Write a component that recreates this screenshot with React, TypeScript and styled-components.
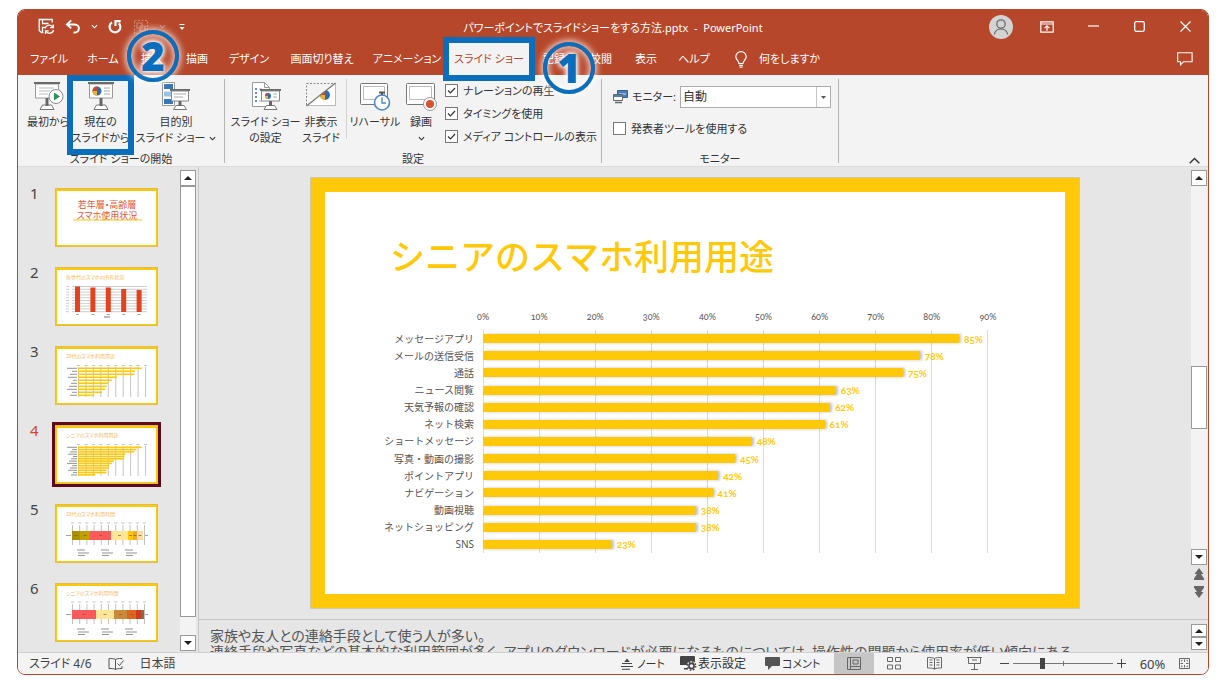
import React from "react";
import styled, { createGlobalStyle, css } from "styled-components";

const color = {
  brand: "#b7472a",
  ribbon: "#f3f3f3",
  canvas: "#e6e6e6",
  line: "#c6c6c6",
  text: "#333333",
  slide: "#ffc90a",
  mark: "#0a6ebd",
};

const Global = createGlobalStyle`
  *, *::before, *::after { box-sizing: border-box; }
  body {
    margin: 0;
    background: #fff;
    color: ${color.text};
    font-family: "Noto Sans", "Noto Sans CJK JP", sans-serif;
    font-size: 11px;
    line-height: 16px;
    font-feature-settings: "palt";
  }
  button, select, input { font: inherit; color: inherit; font-feature-settings: inherit; margin: 0; }
  button { border: 0; padding: 0; background: none; }
  svg { display: block; flex: none; }
`;

const Page = styled.div`
  height: 100vh;
  min-height: 520px;
  padding: 9px 16px 12px 17px;
`;

const Window = styled.div`
  height: 100%;
  display: flex;
  flex-direction: column;
  border: 1px solid ${color.brand};
  border-radius: 8px;
  background: ${color.canvas};
`;

/* Title bar */
const TitleBar = styled.header`
  flex: none;
  height: 33px;
  display: grid;
  grid-template-columns: 1fr auto 1fr;
  align-items: center;
  background: ${color.brand};
  border-radius: 7px 7px 0 0;
  color: #fff;
`;
const DocTitle = styled.h1`
  margin: 0;
  padding-top: 2px;
  font-size: 11px;
  font-weight: 400;
  white-space: pre;
`;
const QuickAccess = styled.div`
  display: flex;
  align-items: center;
  padding-left: 19px;
  gap: 9px;
`;
const WindowButtons = styled.div`
  display: flex;
  align-items: center;
  justify-content: flex-end;
`;
const IconButton = styled.button<{ $w: number; $dim?: boolean }>`
  display: flex;
  align-items: center;
  justify-content: center;
  width: ${(p) => p.$w}px;
  height: 26px;
  opacity: ${(p) => (p.$dim ? 0.35 : 1)};
`;

/* Tabs */
const TabBar = styled.nav`
  flex: none;
  height: 32px;
  display: flex;
  align-items: stretch;
  padding-left: 3px;
  background: ${color.brand};
  color: #fff;
`;
const Tab = styled.button<{ $w: number; $active?: boolean }>`
  position: relative;
  flex: none;
  width: ${(p) => p.$w}px;
  white-space: nowrap;
  display: flex;
  align-items: center;
  justify-content: center;
  ${(p) =>
    p.$active &&
    css`
      background: ${color.ribbon};
      color: ${color.brand};
    `}
`;
const TellMe = styled.button`
  display: flex;
  align-items: center;
  gap: 12px;
  padding-left: 16px;
`;
const CommentButton = styled.button`
  margin-left: auto;
  padding-right: 15px;
`;

/* Callouts laid over the ribbon */
const Frame = styled.span`
  position: absolute;
  inset: -6px;
  border: 6px solid ${color.mark};
  pointer-events: none;
  z-index: 2;
`;
const StepBadge = styled.span`
  position: absolute;
  z-index: 3;
  width: 52px;
  height: 52px;
  border: 4px solid ${color.mark};
  border-radius: 50%;
  box-shadow: 0 0 6px 2px rgba(255, 255, 255, 0.75), inset 0 0 6px 2px rgba(255, 255, 255, 0.75);
  color: ${color.mark};
  font: 800 40px/44px "Open Sans", sans-serif;
  text-align: center;
  text-shadow: 0 0 5px #fff, 0 0 5px #fff, 0 0 8px #fff;
  pointer-events: none;
`;
const StepOne = styled(StepBadge)`
  left: 94px;
  top: -1px;
`;
const StepTwo = styled(StepBadge)`
  left: 54px;
  top: -49px;
`;

/* Ribbon */
const Ribbon = styled.section`
  flex: none;
  height: 92px;
  display: flex;
  align-items: flex-start;
  padding-top: 4px;
  background: ${color.ribbon};
  border-bottom: 1px solid #dcdcdc;
`;
const Group = styled.div<{ $w: number }>`
  flex: none;
  width: ${(p) => p.$w}px;
  display: flex;
  flex-direction: column;
`;
const GroupBody = styled.div<{ $pad: number }>`
  height: 72px;
  padding-left: ${(p) => p.$pad}px;
  display: flex;
  align-items: flex-start;
`;
const GroupName = styled.div`
  text-align: center;
`;
const Divider = styled.div`
  flex: none;
  width: 1px;
  height: 84px;
  background: #b4b4b4;
`;
const ShortDivider = styled.div`
  flex: none;
  width: 1px;
  height: 60px;
  margin: 0 1px 0 4px;
  background: #d4d4d4;
`;
const BigButton = styled.button<{ $w: number }>`
  position: relative;
  flex: none;
  width: ${(p) => p.$w}px;
  height: 70px;
  padding-top: 3px;
  display: flex;
  flex-direction: column;
  align-items: center;
  white-space: nowrap;
  & > svg:first-child { margin-bottom: 3px; }
`;
const ButtonLine = styled.span`
  height: 16px;
  display: flex;
  align-items: center;
  gap: 4px;
`;
const CurrentFrame = styled(Frame)`
  inset: -4px -6px -6px;
`;
const CheckList = styled.div`
  display: flex;
  flex-direction: column;
  padding-left: 5px;
`;
const CheckLabel = styled.label`
  height: 23px;
  display: flex;
  align-items: center;
  gap: 5px;
  white-space: nowrap;
`;
const CheckBox = styled.input`
  appearance: none;
  flex: none;
  width: 13px;
  height: 13px;
  border: 1px solid #777;
  background: #fff;
  &:checked {
    background: #fff
      url("data:image/svg+xml,%3Csvg xmlns='http://www.w3.org/2000/svg' viewBox='0 0 11 11'%3E%3Cpath d='M2 5.5 4.5 8 9 3' fill='none' stroke='%23333' stroke-width='1.2'/%3E%3C/svg%3E")
      center / 11px no-repeat;
  }
`;
const MonitorForm = styled.div`
  display: flex;
  flex-direction: column;
  padding-top: 7px;
  gap: 9px;
`;
const MonitorRow = styled.div`
  display: flex;
  align-items: center;
  gap: 4px;
  width: 218px;
  white-space: nowrap;
`;
const SelectShell = styled.div`
  position: relative;
  width: 154px;
  height: 22px;
  margin-left: auto;
  border: 1px solid #ababab;
  background: #fff;
`;
const Select = styled.select`
  appearance: none;
  width: 100%;
  height: 100%;
  padding: 0 16px 0 2px;
  border: 0;
  background: none;
  outline: 0;
  font-size: 12px;
`;
const SelectArrow = styled.span`
  position: absolute;
  right: 0;
  top: 0;
  width: 14px;
  height: 100%;
  border-left: 1px solid #c6c6c6;
  display: flex;
  align-items: center;
  justify-content: center;
  pointer-events: none;
`;
const Collapse = styled.button`
  margin: auto 8px 0 auto;
`;

/* Work area */
const Work = styled.div`
  flex: 1;
  min-height: 0;
  display: flex;
`;
const ThumbPane = styled.aside`
  flex: none;
  width: 181px;
  padding-right: 1px;
  display: flex;
  overflow: hidden;
  border-right: 1px solid ${color.line};
`;
const ThumbList = styled.ol`
  flex: 1;
  margin: 0;
  padding: 21px 0 0 12px;
  list-style: none;
  overflow: hidden;
`;
const ThumbItem = styled.li<{ $active?: boolean }>`
  height: 79px;
  display: flex;
  font-size: 15px;
  line-height: 10px;
  color: ${(p) => (p.$active ? "#d24726" : "#444")};
  & > span { width: 25px; }
  & > svg { outline: ${(p) => (p.$active ? "3px solid #5e0a1c" : "0")}; }
`;
const ScrollBar = styled.div`
  flex: none;
  width: 16px;
  margin: 3px 1px 1px 0;
  display: flex;
  flex-direction: column;
`;
const ScrollButton = styled.button`
  flex: none;
  height: 16px;
  border: 1px solid #999;
  background: #fff;
  display: flex;
  align-items: center;
  justify-content: center;
`;
const Track = styled.div<{ $grow: number }>`
  flex: ${(p) => p.$grow} 0 0;
  background: #f3f3f3;
`;
const Handle = styled.div<{ $grow: number }>`
  flex: ${(p) => p.$grow} 0 0;
  border: 1px solid #999;
  background: #fff;
`;
const SlideSteps = styled.div`
  flex: none;
  height: 53px;
  padding-top: 3px;
  display: flex;
  flex-direction: column;
  align-items: center;
  gap: 4px;
`;
const Editor = styled.main`
  flex: 1;
  min-width: 0;
  display: flex;
  flex-direction: column;
`;
const Row = styled.div<{ $grow?: boolean }>`
  flex: ${(p) => (p.$grow ? "1" : "none")};
  min-height: 0;
  display: flex;
`;
const Stage = styled.div`
  flex: 1;
  min-width: 0;
  padding: 10px 0;
  display: flex;
  justify-content: center;
`;
const Slide = styled.article`
  height: 100%;
  aspect-ratio: 770 / 432;
  border: 15px solid ${color.slide};
  outline: 1px solid #d0c9ae;
  outline-offset: -1px;
  background: #fff;
  display: flex;
  flex-direction: column;
  font-feature-settings: normal;
`;
const SlideTitle = styled.h2`
  margin: 42px 0 0 65px;
  font: 500 35px/42px "Noto Sans CJK JP", sans-serif;
  color: ${color.slide};
  white-space: nowrap;
`;
const Chart = styled.div`
  flex: 1;
  display: grid;
  grid-template-columns: 158px 1fr;
  grid-template-rows: 14px 1fr;
  row-gap: 6px;
  margin: 34px 77px 41px 0;
  color: #555;
`;
const Axis = styled.div`
  grid-column: 2;
  margin: 0 -28px;
  display: grid;
  grid-template-columns: repeat(10, 1fr);
  font: 9px/14px Lato, sans-serif;
  font-variant-numeric: oldstyle-nums;
  text-align: center;
`;
const Categories = styled.div`
  display: grid;
  grid-template-rows: repeat(13, 1fr);
  align-items: center;
  justify-items: end;
  padding-right: 9px;
  font-size: 10px;
  line-height: 14px;
`;
const Plot = styled.div`
  display: grid;
  grid-template-rows: repeat(13, 1fr);
  align-items: center;
  border-right: 1px solid #d9d9d9;
  background: linear-gradient(to right, #d9d9d9 1px, transparent 1px) 0 0 / 56px 100%;
`;
const BarRow = styled.div`
  display: flex;
  align-items: center;
  gap: 5px;
  color: ${color.slide};
  font: 700 10px/14px Lato, sans-serif;
  font-variant-numeric: oldstyle-nums;
`;
const Bar = styled.div`
  flex: none;
  height: 9px;
  background: ${color.slide};
  box-shadow: 2px 0 3px rgba(0, 0, 0, 0.25);
`;
const Notes = styled.div`
  flex: 1;
  height: 33px;
  padding: 8px 0 0 11px;
  border-top: 1px solid ${color.line};
  overflow: hidden;
  white-space: nowrap;
  font-size: 14px;
  color: #555;
`;
const NotesScroll = styled.div`
  flex: none;
  width: 17px;
  height: 33px;
  padding: 4px 1px 2px 0;
  border-top: 1px solid ${color.line};
  display: flex;
  flex-direction: column;
  & > button { flex: 1; }
`;

/* Status bar */
const StatusBar = styled.footer`
  flex: none;
  height: 22px;
  display: flex;
  align-items: center;
  border-top: 1px solid #d0d0d0;
  border-radius: 0 0 7px 7px;
  background: ${color.ribbon};
  padding: 0 18px 0 11px;
  color: #444;
  white-space: nowrap;
  font-size: 12px;
`;
const StatusLeft = styled.div`
  flex: 1;
  display: flex;
  align-items: center;
  gap: 16px;
`;
const StatusButton = styled.button<{ $w: number; $gap?: number }>`
  flex: none;
  width: ${(p) => p.$w}px;
  display: flex;
  align-items: center;
  gap: ${(p) => p.$gap ?? 2}px;
  color: #333;
`;
const SmallText = styled.span`
  font-size: 11px;
`;
const ViewButton = styled.button<{ $active?: boolean }>`
  flex: none;
  width: 40px;
  height: 21px;
  display: flex;
  align-items: center;
  justify-content: center;
  background: ${(p) => (p.$active ? "#c6c6c6" : "none")};
`;
const ZoomGroup = styled.div`
  display: flex;
  align-items: center;
  gap: 4px;
  padding-left: 6px;
`;
const ZoomRange = styled.input`
  appearance: none;
  width: 100px;
  height: 11px;
  background:
    linear-gradient(#777, #777) center / 1px 5px no-repeat,
    linear-gradient(#777, #777) center / 100% 1px no-repeat;
  &::-webkit-slider-thumb {
    appearance: none;
    width: 5px;
    height: 11px;
    background: #444;
  }
`;
const ZoomValue = styled.button`
  width: 53px;
  font-size: 13px;
  text-align: center;
`;

const Triangle = ({ down, small }: { down?: boolean; small?: boolean }) => (
  <svg width={small ? 5 : 8} height={small ? 3 : 4} viewBox="0 0 8 4" preserveAspectRatio="none">
    <path d={down ? "M0 0h8L4 4z" : "M0 4h8L4 0z"} fill={small ? "#555" : "#222"} />
  </svg>
);
const Chevron = ({ up, w = 7 }: { up?: boolean; w?: number }) => (
  <svg width={w} height={w} viewBox="0 0 8 8" fill="none" stroke="currentColor" strokeWidth={up ? 1 : 1.3}>
    <path d={up ? "M0.5 6 4 2.5 7.5 6" : "M1 2.5 4 5.5 7 2.5"} />
  </svg>
);

const SaveIcon = () => (
  <svg width="17" height="17" viewBox="0 0 17 17" fill="none" stroke="#fff" strokeWidth="1.3">
    <path d="M5.5 14.5H3.5L1.2 12.500V1.500h13v3M4.500 1.500v4h6M4.500 14.500V9.500H7" />
    <path d="M7.200 10.400a4.200 4.200 0 0 1 7.800-1M15.600 12a4.200 4.200 0 0 1-7.800 1M15.300 6.400v3.200h-3.200M7.500 16v-3.200h3.200" />
  </svg>
);
const UndoIcon = () => (
  <svg width="16" height="16" viewBox="0 0 16 16" fill="none" stroke="#fff" strokeWidth="2">
    <path d="M6.200 1.400 2 5.400l4.200 4M2 5.400h7.500c6 0 6 8.200-1 8.400" />
  </svg>
);
const RepeatIcon = () => (
  <svg width="16" height="16" viewBox="0 0 16 16" fill="none" stroke="#fff" strokeWidth="2.200">
    <path d="M5 3.400a5.400 5.400 0 1 0 6.800.700M8.500 7V2.200h5.200" />
  </svg>
);
const ObjectsIcon = () => (
  <svg width="16" height="16" viewBox="0 0 16 16" fill="none" stroke="#fff" strokeWidth="1.2">
    <path d="M1.500 1.500h13v13h-13z" strokeDasharray="2 1.500" />
    <path d="M4 4h5v5H4zM7 7h5v5H7z" />
  </svg>
);
const CustomizeIcon = () => (
  <svg width="6" height="8" viewBox="0 0 6 8" fill="#fff">
    <path d="M0.5 1h5v1h-5zM0.5 4h5L3 7z" />
  </svg>
);
const AccountIcon = () => (
  <svg width="24" height="24" viewBox="0 0 24 24" fill="none" stroke="#6b6b6b" strokeWidth="1.300">
    <circle cx="12" cy="12" r="12" fill="#d3d3d3" stroke="none" />
    <circle cx="12" cy="9" r="4.200" />
    <path d="M5.300 19.500a6.800 6.800 0 0 1 13.400 0" />
  </svg>
);
const RibbonModeIcon = () => (
  <svg width="14" height="12" viewBox="0 0 14 12" fill="none" stroke="#fff" strokeWidth="1.2">
    <path d="M.8.8h12.4v10.4H.8zM.8 3h12.4M7 9.8V5M4.6 7.2 7 4.8l2.4 2.4" />
  </svg>
);
const MinIcon = () => (
  <svg width="11" height="11" viewBox="0 0 11 11" stroke="#fff" strokeWidth="1.2">
    <path d="M0 5h11" />
  </svg>
);
const MaxIcon = () => (
  <svg width="11" height="11" viewBox="0 0 11 11" fill="none" stroke="#fff" strokeWidth="1.3">
    <rect x=".7" y=".7" width="9.6" height="9.6" rx="1.5" />
  </svg>
);
const CloseIcon = () => (
  <svg width="11" height="11" viewBox="0 0 11 11" stroke="#fff" strokeWidth="1.2">
    <path d="M.5.5l10 10M10.5.5l-10 10" />
  </svg>
);
const BulbIcon = () => (
  <svg width="12" height="17" viewBox="0 0 12 17" fill="none" stroke="#fff" strokeWidth="1.2">
    <path d="M4 12.500c0-2.600-3.200-3.600-3.200-6.700a5.200 5.200 0 0 1 10.400 0c0 3.100-3.200 4.100-3.200 6.700zM4 14.300h4M4.500 16.200h3" />
  </svg>
);
const CommentIcon = () => (
  <svg width="16" height="14" viewBox="0 0 16 14" fill="none" stroke="#fff" strokeWidth="1.1">
    <path d="M.7.7h14.400v9H6.500L3.500 12.900V9.700H.7z" />
  </svg>
);

const Stand = ({ x, y, w = 26 }: { x: number; y: number; w?: number }) => (
  <g transform={`translate(${x} ${y})`}>
    <path d={`M1.500 2h${w - 3}v14h-${w - 3}z`} fill="#fff" stroke="#9a9a9a" />
    <path d={`M0 0h${w}v2H0z`} fill="#6a6a6a" />
    <path d={`M${w / 2 - 7} 27.500l2.500-4.500h9l2.500 4.500z`} fill="#fff" stroke="#777" />
    <path d={`M${w / 2} 16v8`} stroke="#666" strokeWidth="3" />
  </g>
);
const Pie = ({ x, y, r }: { x: number; y: number; r: number }) => (
  <g transform={`translate(${x} ${y})`}>
    <circle r={r} fill="#2b6cb8" />
    <path d={`M0 0V${-r}A${r} ${r} 0 0 0 ${-r} 0z`} fill="#d24726" />
    <path d={`M0 0H${-r}A${r} ${r} 0 0 0 0 ${r}z`} fill="#f0b429" />
  </g>
);
const FromStartIcon = () => (
  <svg width="32" height="29" viewBox="0 0 32 29" fill="none">
    <Stand x={2} y={0} />
    <path d="M7 6h15M7 9h11M7 12h9" stroke="#bbb" />
    <circle cx="24" cy="14.500" r="7" fill="#fff" stroke="#8a8a8a" />
    <path d="M22 10.500l6 4-6 4z" fill="#2e9060" />
  </svg>
);
const FromCurrentIcon = () => (
  <svg width="28" height="29" viewBox="0 0 28 29" fill="none">
    <Stand x={1} y={0} />
    <Pie x={10} y={9} r={4.5} />
    <path d="M17 6h6M17 9h6M17 12h6" stroke="#aaa" />
  </svg>
);
const CustomShowIcon = () => (
  <svg width="30" height="29" viewBox="0 0 30 29" fill="none">
    <path d="M1.500.500h12v23h-12z" fill="#fff" stroke="#999" />
    <path d="M3 2h9v5H3zM3 17h9v5H3z" fill="#3a76b8" />
    <path d="M3 9.500h9v5H3z" fill="#9cc0e6" />
    <path d="M9 7h20v2H9z" fill="#6a6a6a" />
    <path d="M10.500 9h17v10h-17z" fill="#fff" stroke="#888" />
    <path d="M13 12h12M13 15h9" stroke="#aaa" />
    <path d="M12.500 27.500l2.500-4h8l2.500 4z" fill="#fff" stroke="#777" />
    <path d="M19 19v5" stroke="#666" strokeWidth="3" />
  </svg>
);
const SetupIcon = () => (
  <svg width="32" height="29" viewBox="0 0 32 29" fill="none">
    <path d="M2.500.500h12l5 5v19h-17z" fill="#fff" stroke="#999" />
    <path d="M14.500.500v5h5" stroke="#999" />
    <path d="M5 7h2M5 11h2M5 15h2M5 19h2" stroke="#2b6cb8" strokeWidth="1.500" />
    <path d="M9 7h3M9 19h4" stroke="#aaa" />
    <path d="M10 7h21v2H10z" fill="#6a6a6a" />
    <path d="M11.500 9h18v10h-18z" fill="#fff" stroke="#888" />
    <Pie x={18} y={14} r={3} />
    <path d="M23 12h4M23 15h4" stroke="#aaa" />
    <path d="M14 27.500l2.500-4h8l2.500 4z" fill="#fff" stroke="#777" />
    <path d="M20.500 19v5" stroke="#666" strokeWidth="3" />
  </svg>
);
const HideIcon = () => (
  <svg width="30" height="29" viewBox="0 0 30 29" fill="none">
    <path d="M.500 1.500h29v22H.500z" fill="#fff" stroke="#888" strokeDasharray="2 1.500" />
    <Pie x={19} y={13} r={5} />
    <path d="M1 2h27L1 23z" fill="#f3f3f3" />
    <path d="M29.500 1.500v22H.500" stroke="#bbb" />
    <path d="M.500 24L29.500 1" stroke="#777" strokeWidth="1.200" />
  </svg>
);
const RehearseIcon = () => (
  <svg width="32" height="29" viewBox="0 0 32 29" fill="none">
    <rect x="1.500" y="1.500" width="27" height="21" rx="1" fill="#fff" stroke="#777" />
    <path d="M4.500 4.500h21v13h-21z" stroke="#bbb" />
    <circle cx="23" cy="20.500" r="7.500" fill="#fff" stroke="#4a86c5" strokeWidth="1.600" />
    <path d="M20 10.500h6M23 10.500V13" stroke="#555" strokeWidth="2" />
    <path d="M23 15.500V21h4" stroke="#4a86c5" strokeWidth="1.400" />
  </svg>
);
const RecordIcon = () => (
  <svg width="32" height="29" viewBox="0 0 32 29" fill="none">
    <rect x="1.500" y="1.500" width="28" height="21" rx="1" fill="#fff" stroke="#777" />
    <path d="M4.500 4.500h22v13h-22z" stroke="#bbb" />
    <circle cx="25" cy="22" r="6.500" fill="#fff" stroke="#999" />
    <circle cx="25" cy="22" r="4" fill="#d95331" />
  </svg>
);
const MonitorIcon = () => (
  <svg width="15" height="14" viewBox="0 0 15 14" fill="none">
    <path d="M4.500.500h10v7h-10z" fill="#4a7fb8" stroke="#2f5f96" />
    <path d="M6 4h7" stroke="#cfe0f2" />
    <path d="M.500 4.500h9v6h-9z" fill="#fff" stroke="#666" />
    <path d="M1 6h8" stroke="#4a7fb8" strokeWidth="2" />
    <path d="M2 12.500h7" stroke="#666" strokeWidth="1.500" />
  </svg>
);

const DoubleArrow = ({ down }: { down?: boolean }) => (
  <svg width="10" height="13" viewBox="0 0 10 13" fill="#666">
    <path
      transform={down ? "rotate(180 5 6.500)" : undefined}
      d="M5 0l4.500 6H7l3 4.500V12H0v-1.500L3 6H.500z"
    />
  </svg>
);

const BookIcon = () => (
  <svg width="16" height="14" viewBox="0 0 16 14" fill="none" stroke="#555">
    <path d="M7.500 2.500v10M7.500 2.500C6 1.500 3 1.500 1 1.500v10c3 0 5 0 6.500 1 1-.700 3-1 6.500-1V9M7.500 2.500c1-.700 2.500-1 4-1h2.500v1" />
    <path d="M9.500 6.500l2 2 4-5" />
  </svg>
);
const NotesIcon = () => (
  <svg width="12" height="12" viewBox="0 0 12 12" stroke="#444" strokeWidth="1.100">
    <path d="M6 .500L8.800 4H3.200z" fill="#444" stroke="none" />
    <path d="M1 5.500h10M0 8.500h12M1 11.300h8" />
  </svg>
);
const DisplaySettingsIcon = () => (
  <svg width="17" height="15" viewBox="0 0 17 15" fill="none">
    <path d="M1 0h13a1 1 0 0 1 1 1v8H0V1a1 1 0 0 1 1-1zM4 12h4v1.500H4z" fill="#444" />
    <circle cx="11.500" cy="10" r="4.800" fill="#f3f3f3" />
    <circle cx="11.500" cy="10" r="2.600" stroke="#444" strokeWidth="1.600" />
    <circle cx="11.500" cy="10" r="4.200" stroke="#444" strokeWidth="1.400" strokeDasharray="1.600 1.700" />
  </svg>
);
const BalloonIcon = () => (
  <svg width="15" height="13" viewBox="0 0 15 13" fill="#555">
    <path d="M1 0h13a1 1 0 0 1 1 1v7a1 1 0 0 1-1 1H7l-4 4V9H1a1 1 0 0 1-1-1V1a1 1 0 0 1 1-1z" />
  </svg>
);
const NormalViewIcon = () => (
  <svg width="14" height="13" viewBox="0 0 14 13" fill="none" stroke="#666">
    <path d="M.500.500h13v12H.500zM3.500.500v12M6 3h5v4H6zM3.500 9.500h10" />
  </svg>
);
const SorterIcon = () => (
  <svg width="14" height="13" viewBox="0 0 14 13" fill="none" stroke="#666">
    <path d="M.500.500h5v4h-5zM8.500.500h5v4h-5zM.500 8h5v4h-5zM8.500 8h5v4h-5z" />
  </svg>
);
const ReadingIcon = () => (
  <svg width="15" height="13" viewBox="0 0 15 13" fill="none" stroke="#666">
    <path d="M7.500 1.500v11M7.500 1.500C6 .500 3 .500.500.500v10.500c3 0 5 0 7 1 2-1 4-1 7-1V.500c-3 0-5.500 0-7 1M2.500 3h3M2.500 5.500h3M2.500 8h3M9.500 3h3M9.500 5.500h3M9.500 8h3" />
  </svg>
);
const ShowIcon = () => (
  <svg width="15" height="13" viewBox="0 0 15 13" fill="none" stroke="#666">
    <path d="M0 .500h15M1.500.500v6h12v-6M7.500 6.500v5.500M4 12.500h7M5 3h5" />
  </svg>
);
const FitIcon = () => (
  <svg width="11" height="11" viewBox="0 0 11 11" fill="none" stroke="#666">
    <path d="M.500.500h10v10H.500zM5.500 1.500v2.500M5.500 7v2.500M1.500 5.500H4M7 5.500h2.500M2.500 3.500v-1h1M7.500 2.500h1v1M2.500 7.500v1h1M7.500 8.500h1v-1" />
  </svg>
);

/* Slide thumbnails */
const ThumbFrame = ({ title, children }: { title?: string; children: React.ReactNode }) => (
  <svg width="103" height="59" viewBox="0 0 103 59">
    <rect width="103" height="59" fill="#e0bf48" />
    <rect x="1" y="1" width="101" height="57" fill={color.slide} />
    <rect x="2" y="3" width="99" height="54" fill="#fff" />
    {title && (
      <text x="11" y="12" fontSize="5" fill="#f6b860" fontFamily="'Noto Sans CJK JP', sans-serif">
        {title}
      </text>
    )}
    {children}
  </svg>
);
const ThumbCover = () => (
  <ThumbFrame>
    <g fontSize="9" fill="#e0583c" textAnchor="middle" fontFamily="'Noto Sans CJK JP', sans-serif">
      <text x="52" y="20">若年層・高齢層</text>
      <text x="52" y="31">スマホ使用状況</text>
    </g>
    <path d="M18 32h69" stroke={color.slide} />
  </ThumbFrame>
);
const ThumbColumns = () => (
  <ThumbFrame title="各世代のスマホの所有状況">
    {[0, 1, 2, 3, 4, 5, 6, 7, 8, 9].map((i) => (
      <path key={i} d={`M17 ${19.5 + i * 2.8}h75M11 ${19.5 + i * 2.8}h3`} stroke="#aaa" strokeWidth=".6" />
    ))}
    {[19.5, 20.5, 20.5, 22, 23].map((y, i) => (
      <g key={i}>
        <rect x={20 + i * 15.4} y={y} width="5" height={45 - y} fill="#e2431e" />
        <path d={`M${21 + i * 15.4} 47.500h3`} stroke="#888" strokeWidth=".8" />
      </g>
    ))}
    <path d="M49 50h6" stroke="#777" />
  </ThumbFrame>
);
const ThumbBars = ({ title, values, step }: { title: string; values: number[]; step: number }) => (
  <ThumbFrame title={title}>
    {[0, 1, 2, 3, 4, 5, 6, 7, 8, 9].map((i) => (
      <path key={i} d={`M${23.5 + i * 7.45} 21v30M${22 + i * 7.45} 19.500h3`} stroke="#aaa" strokeWidth=".7" />
    ))}
    {values.map((v, i) => (
      <g key={i}>
        <rect x="23" y={21.5 + i * step} width={v * 0.75} height="1.600" fill={color.slide} />
        <path d={`M${12 + ((i * 5) % 7)} ${22.3 + i * step}H22`} stroke="#777" strokeWidth=".8" />
      </g>
    ))}
  </ThumbFrame>
);
const ThumbStack = ({ title, parts }: { title: string; parts: [number, string][] }) => {
  let x = 17;
  return (
    <ThumbFrame title={title}>
      {[0, 1, 2, 3, 4, 5, 6, 7, 8, 9, 10].map((i) => (
        <path key={i} d={`M${17.5 + i * 7.2} 21v20M${16 + i * 7.2} 19h3`} stroke="#999" strokeWidth=".6" />
      ))}
      {parts.map(([w, fill], i) => {
        const at = x;
        x += w;
        return (
          <g key={i}>
            <rect x={at} y="27" width={w} height="9" fill={fill} />
            <path d={`M${at + w / 2 - 1.5} 31.500h3`} stroke="#8a5a20" strokeWidth=".7" />
          </g>
        );
      })}
      <path d="M11 31.500h5M90 31.500h3" stroke="#888" strokeWidth=".8" />
      {[22, 46, 70].map((lx) => (
        <path
          key={lx}
          d={`M${lx} 46h8M${lx + 1} 49h11M${lx + 1} 51.500h7`}
          stroke="#777"
          strokeWidth=".8"
        />
      ))}
    </ThumbFrame>
  );
};

const bars: [string, number][] = [
  ["メッセージアプリ", 85],
  ["メールの送信受信", 78],
  ["通話", 75],
  ["ニュース閲覧", 63],
  ["天気予報の確認", 62],
  ["ネット検索", 61],
  ["ショートメッセージ", 48],
  ["写真・動画の撮影", 45],
  ["ポイントアプリ", 42],
  ["ナビゲーション", 41],
  ["動画視聴", 38],
  ["ネットショッピング", 38],
  ["SNS", 23],
];

const thumbs = [
  <ThumbCover />,
  <ThumbColumns />,
  <ThumbBars title="20代のスマホ利用用途" values={[85, 76, 75, 52, 45, 40, 38, 36, 32, 20]} step={3} />,
  <ThumbBars title="シニアのスマホ利用用途" values={bars.map((b) => b[1])} step={2.3} />,
  <ThumbStack
    title="20代のスマホ利用時間"
    parts={[[8, "#a89000"], [10, "#bfa100"], [21, "#fb5a5a"], [17, "#ffe699"], [5, "#ffc90a"], [4, "#f0a830"], [6, "#ffdca8"]]}
  />,
  <ThumbStack
    title="シニアのスマホ利用時間"
    parts={[[24, "#fb5a5a"], [18, "#ffe699"], [13, "#c98a3a"], [9, "#e0661e"], [5, "#d03a20"], [3, "#8a6a50"]]}
  />,
];

const Check = ({ id, label, on }: { id: string; label: string; on?: boolean }) => (
  <CheckLabel htmlFor={id}>
    <CheckBox id={id} type="checkbox" defaultChecked={on} />
    {label}
  </CheckLabel>
);

export default function App() {
  return (
    <Page>
      <Global />
      <Window>
        <TitleBar>
          <QuickAccess>
            <IconButton aria-label="上書き保存" $w={18}><SaveIcon /></IconButton>
            <IconButton aria-label="元に戻す" $w={18}><UndoIcon /></IconButton>
            <IconButton aria-label="元に戻す履歴" $w={7}><Chevron /></IconButton>
            <IconButton aria-label="繰り返し" $w={16}><RepeatIcon /></IconButton>
            <IconButton aria-label="グループ化" $w={18} $dim><ObjectsIcon /></IconButton>
            <IconButton aria-label="グループ化の種類" $w={7} $dim><Chevron /></IconButton>
            <IconButton aria-label="クイック アクセスのカスタマイズ" $w={14}><CustomizeIcon /></IconButton>
          </QuickAccess>
          <DocTitle>パワーポイントでスライドショーをする方法.pptx  -  PowerPoint</DocTitle>
          <WindowButtons>
            <IconButton aria-label="アカウント" $w={46}><AccountIcon /></IconButton>
            <IconButton aria-label="リボンの表示オプション" $w={46}><RibbonModeIcon /></IconButton>
            <IconButton aria-label="最小化" $w={46}><MinIcon /></IconButton>
            <IconButton aria-label="最大化" $w={46}><MaxIcon /></IconButton>
            <IconButton aria-label="閉じる" $w={46}><CloseIcon /></IconButton>
          </WindowButtons>
        </TitleBar>

        <TabBar>
          <Tab $w={56}>ファイル</Tab>
          <Tab $w={52}>ホーム</Tab>
          <Tab $w={46}>挿入</Tab>
          <Tab $w={44}>描画</Tab>
          <Tab $w={60}>デザイン</Tab>
          <Tab $w={86}>画面切り替え</Tab>
          <Tab $w={84}>アニメーション</Tab>
          <Tab $w={80} $active>
            スライド ショー
            <Frame />
            <StepOne>1</StepOne>
          </Tab>
          <Tab $w={50}>記録</Tab>
          <Tab $w={44}>校閲</Tab>
          <Tab $w={46}>表示</Tab>
          <Tab $w={50}>ヘルプ</Tab>
          <TellMe><BulbIcon />何をしますか</TellMe>
          <CommentButton aria-label="コメント"><CommentIcon /></CommentButton>
        </TabBar>

        <Ribbon>
          <Group $w={206}>
            <GroupBody $pad={5}>
              <BigButton $w={50}>
                <FromStartIcon />
                <ButtonLine>最初から</ButtonLine>
              </BigButton>
              <BigButton $w={55}>
                <FromCurrentIcon />
                <ButtonLine>現在の</ButtonLine>
                <ButtonLine>スライドから</ButtonLine>
                <CurrentFrame />
                <StepTwo>2</StepTwo>
              </BigButton>
              <BigButton $w={96}>
                <CustomShowIcon />
                <ButtonLine>目的別</ButtonLine>
                <ButtonLine>スライド ショー <Chevron /></ButtonLine>
              </BigButton>
            </GroupBody>
            <GroupName>スライド ショーの開始</GroupName>
          </Group>
          <Divider />
          <Group $w={376}>
            <GroupBody $pad={6}>
              <BigButton $w={69}>
                <SetupIcon />
                <ButtonLine>スライド ショー</ButtonLine>
                <ButtonLine>の設定</ButtonLine>
              </BigButton>
              <BigButton $w={42}>
                <HideIcon />
                <ButtonLine>非表示</ButtonLine>
                <ButtonLine>スライド</ButtonLine>
              </BigButton>
              <ShortDivider />
              <BigButton $w={54}>
                <RehearseIcon />
                <ButtonLine>リハーサル</ButtonLine>
              </BigButton>
              <BigButton $w={38}>
                <RecordIcon />
                <ButtonLine>録画</ButtonLine>
                <ButtonLine><Chevron /></ButtonLine>
              </BigButton>
              <CheckList>
                <Check id="narration" label="ナレーションの再生" on />
                <Check id="timing" label="タイミングを使用" on />
                <Check id="media" label="メディア コントロールの表示" on />
              </CheckList>
            </GroupBody>
            <GroupName>設定</GroupName>
          </Group>
          <Divider />
          <Group $w={236}>
            <GroupBody $pad={11}>
              <MonitorForm>
                <MonitorRow>
                  <MonitorIcon />
                  <label htmlFor="monitor">モニター:</label>
                  <SelectShell>
                    <Select id="monitor" defaultValue="auto">
                      <option value="auto">自動</option>
                    </Select>
                    <SelectArrow><Triangle down small /></SelectArrow>
                  </SelectShell>
                </MonitorRow>
                <Check id="presenter" label="発表者ツールを使用する" />
              </MonitorForm>
            </GroupBody>
            <GroupName>モニター</GroupName>
          </Group>
          <Divider />
          <Collapse aria-label="リボンを折りたたむ"><Chevron up w={11} /></Collapse>
        </Ribbon>

        <Work>
          <ThumbPane>
            <ThumbList>
              {thumbs.map((t, i) => (
                <ThumbItem key={i} $active={i === 3}>
                  <span>{i + 1}</span>
                  {t}
                </ThumbItem>
              ))}
            </ThumbList>
            <ScrollBar>
              <ScrollButton aria-label="上へ"><Triangle /></ScrollButton>
              <Handle $grow={432} />
              <Track $grow={18} />
              <ScrollButton aria-label="下へ"><Triangle down /></ScrollButton>
            </ScrollBar>
          </ThumbPane>

          <Editor>
            <Row $grow>
              <Stage>
                <Slide>
                  <SlideTitle>シニアのスマホ利用用途</SlideTitle>
                  <Chart>
                    <Axis>
                      {[0, 10, 20, 30, 40, 50, 60, 70, 80, 90].map((n) => (
                        <span key={n}>{n}%</span>
                      ))}
                    </Axis>
                    <Categories>
                      {bars.map(([name]) => (
                        <span key={name}>{name}</span>
                      ))}
                    </Categories>
                    <Plot>
                      {bars.map(([name, value]) => (
                        <BarRow key={name}>
                          <Bar style={{ width: `${(value / 90) * 100}%` }} />
                          {value}%
                        </BarRow>
                      ))}
                    </Plot>
                  </Chart>
                </Slide>
              </Stage>
              <ScrollBar>
                <ScrollButton aria-label="前へ"><Triangle /></ScrollButton>
                <Track $grow={181} />
                <Handle $grow={62} />
                <Track $grow={121} />
                <ScrollButton aria-label="次へ"><Triangle down /></ScrollButton>
                <SlideSteps>
                  <button aria-label="前のスライド"><DoubleArrow /></button>
                  <button aria-label="次のスライド"><DoubleArrow down /></button>
                </SlideSteps>
              </ScrollBar>
            </Row>
            <Row>
              <Notes>
                家族や友人との連絡手段として使う人が多い。
                <br />
                連絡手段や写真などの基本的な利用範囲が多く、アプリのダウンロードが必要になるものについては、操作性の問題から使用率が低い傾向にある
              </Notes>
              <NotesScroll>
                <ScrollButton aria-label="ノートを上へ"><Triangle /></ScrollButton>
                <ScrollButton aria-label="ノートを下へ"><Triangle down /></ScrollButton>
              </NotesScroll>
            </Row>
          </Editor>
        </Work>

        <StatusBar>
          <StatusLeft>
            <span>スライド 4/6</span>
            <BookIcon />
            <span>日本語</span>
          </StatusLeft>
          <StatusButton $w={59} $gap={4}><NotesIcon /><SmallText>ノート</SmallText></StatusButton>
          <StatusButton $w={85} $gap={1}><DisplaySettingsIcon />表示設定</StatusButton>
          <StatusButton $w={69}><BalloonIcon /><SmallText>コメント</SmallText></StatusButton>
          <ViewButton aria-label="標準" $active><NormalViewIcon /></ViewButton>
          <ViewButton aria-label="スライド一覧"><SorterIcon /></ViewButton>
          <ViewButton aria-label="閲覧表示"><ReadingIcon /></ViewButton>
          <ViewButton aria-label="スライド ショー"><ShowIcon /></ViewButton>
          <ZoomGroup>
            <button aria-label="縮小">
              <svg width="9" height="9" viewBox="0 0 9 9" stroke="#444"><path d="M0 4.500h9" /></svg>
            </button>
            <ZoomRange type="range" aria-label="ズーム" min={0} max={100} defaultValue={28} />
            <button aria-label="拡大">
              <svg width="9" height="9" viewBox="0 0 9 9" stroke="#444"><path d="M0 4.500h9M4.500 0v9" /></svg>
            </button>
          </ZoomGroup>
          <ZoomValue>60%</ZoomValue>
          <button aria-label="ウィンドウに合わせる"><FitIcon /></button>
        </StatusBar>
      </Window>
    </Page>
  );
}
